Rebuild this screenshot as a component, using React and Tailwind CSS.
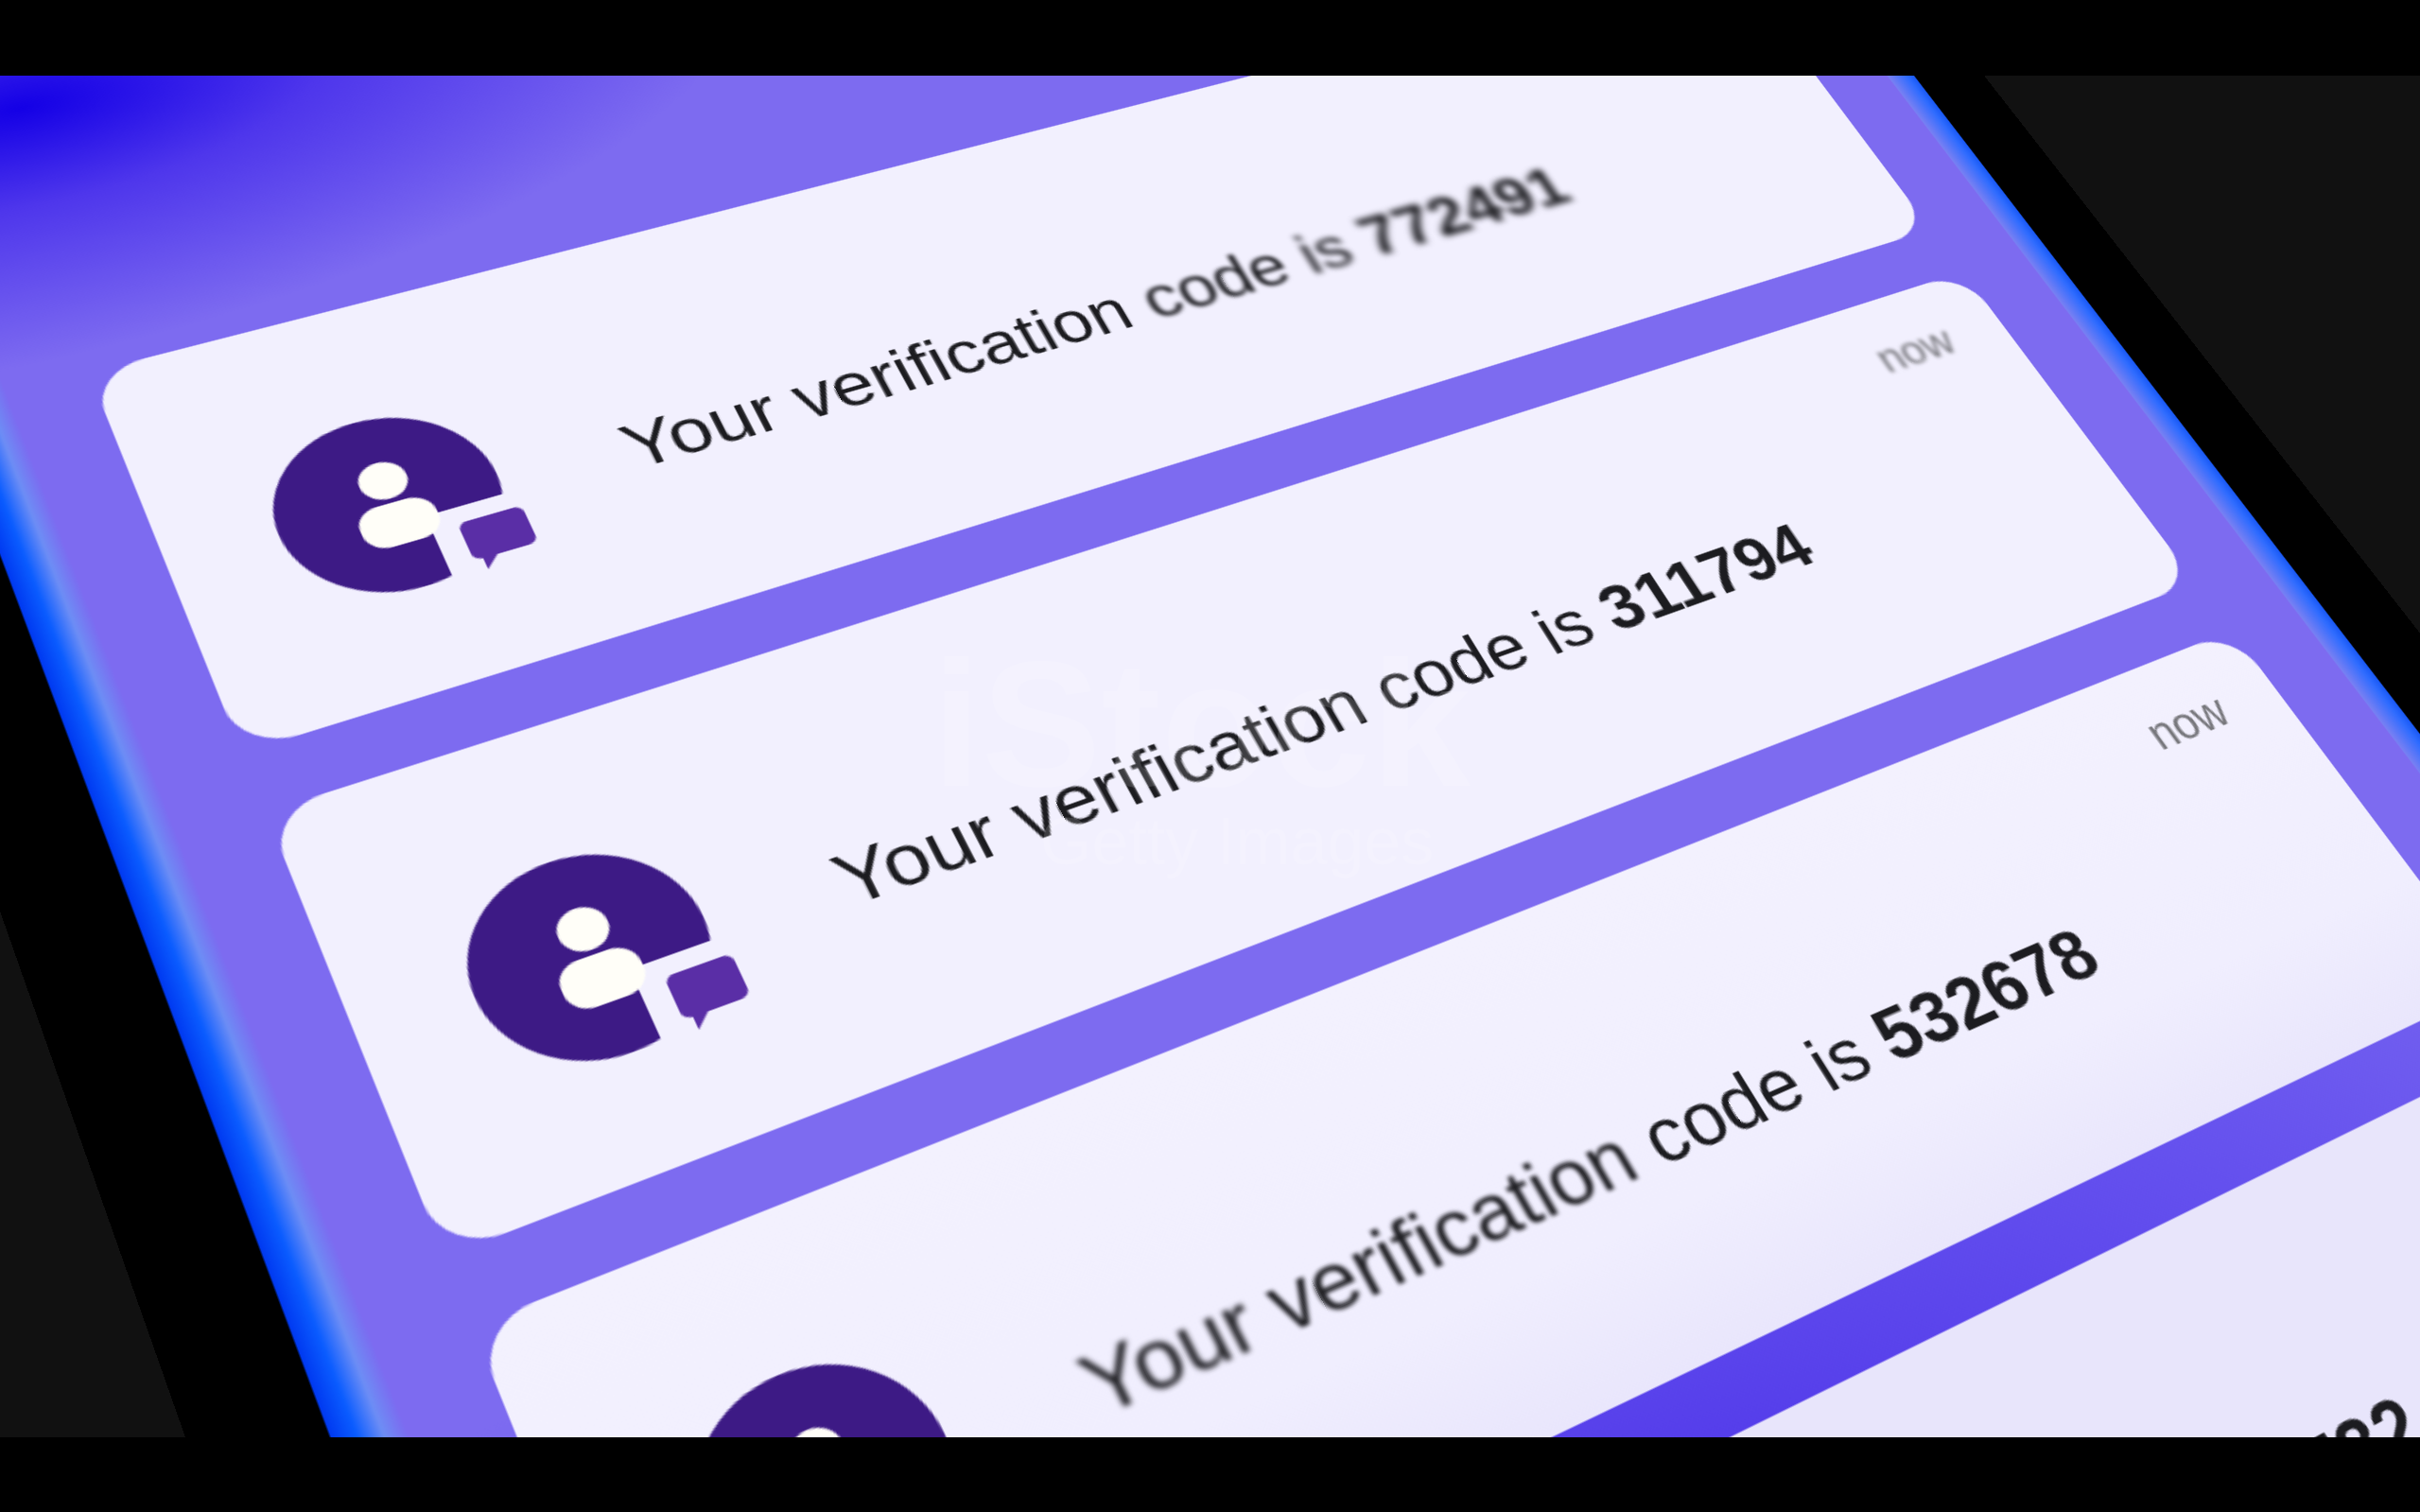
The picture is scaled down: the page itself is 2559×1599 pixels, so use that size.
import React from 'react';

// phone plane -> picture mapping (unit square to quad, then matrix3d)
const CARD_W = 1100;
const CARD_H = 270;
const GAP = 39;
const ORIGIN_X = 132;
const ORIGIN_Y = 400;

function planeMatrix(p0, p1, p2, p3) {
  const W = CARD_W;
  const T = 2 * CARD_H + GAP;
  const dx1 = p1[0] - p2[0];
  const dx2 = p3[0] - p2[0];
  const sx = p0[0] - p1[0] + p2[0] - p3[0];
  const dy1 = p1[1] - p2[1];
  const dy2 = p3[1] - p2[1];
  const sy = p0[1] - p1[1] + p2[1] - p3[1];
  const den = dx1 * dy2 - dx2 * dy1;
  const g = (sx * dy2 - dx2 * sy) / den;
  const h = (dx1 * sy - sx * dy1) / den;
  const a = p1[0] - p0[0] + g * p1[0];
  const b = p3[0] - p0[0] + h * p3[0];
  const d = p1[1] - p0[1] + g * p1[1];
  const e = p3[1] - p0[1] + h * p3[1];
  const A = a / W;
  const B = b / T;
  const C = p0[0] - (a * ORIGIN_X) / W - (b * ORIGIN_Y) / T;
  const D = d / W;
  const E = e / T;
  const F = p0[1] - (d * ORIGIN_X) / W - (e * ORIGIN_Y) / T;
  const G = g / W;
  const H = h / T;
  const I = 1 - (g * ORIGIN_X) / W - (h * ORIGIN_Y) / T;
  const m = [A, D, 0, G, B, E, 0, H, 0, 0, 1, 0, C, F, 0, I];
  return `matrix3d(${m.map((v) => (v / I).toFixed(10)).join(',')})`;
}

const PHONE_MATRIX = planeMatrix([94, 314], [1824, -128], [2322, 536], [470, 1249]);

function ChatIcon() {
  return (
    <svg viewBox="-64 -64 134 140" className="w-[134px] h-[140px] shrink-0">
      <circle cx="0" cy="0" r="60" fill="#3d1a85" />
      <rect x="15" y="15" width="60" height="60" rx="3" fill="#f2f0fe" />
      <circle cx="2" cy="-16" r="13" fill="#fffef8" />
      <rect x="-20" y="0" width="42" height="29" rx="13" fill="#fffef8" />
      <path d="M32 26h28a5 5 0 0 1 5 5v17a5 5 0 0 1-5 5H42l-8 8v-8a5 5 0 0 1-5-5V31a5 5 0 0 1 5-5z" fill="#5a2ea6" />
    </svg>
  );
}

function Card({ words, code, codeBlur, now, nowBlur, iconBlur, tint }) {
  return (
    <div className={`relative shrink-0 w-[1100px] h-[270px] rounded-[30px] flex items-center pl-[55px] blur-[0.4px] ${tint}`}>
      <div className={`mt-[26px] ${iconBlur}`}>
        <ChatIcon />
      </div>
      <p className="ml-[61px] mt-[32px] font-['Liberation_Sans',sans-serif] text-[44.5px] text-[#1c1c20] whitespace-nowrap">
        {words.map(([word, blur]) => (
          <React.Fragment key={word}>
            <span className={`inline-block ${blur}`}>{word}</span>{' '}
          </React.Fragment>
        ))}
        <span className={`inline-block font-bold ${codeBlur}`}>{code}</span>
      </p>
      {now && (
        <span className={`absolute top-[23px] right-[41px] font-['Liberation_Sans',sans-serif] text-[31px] text-[#77777c] ${nowBlur}`}>
          now
        </span>
      )}
    </div>
  );
}

export default function App() {
  return (
    <div className="h-screen flex flex-col bg-black overflow-hidden">
      <div className="h-[80px] shrink-0 bg-black" />
      <div className="relative h-[1440px] shrink-0 overflow-hidden bg-[#111111]">
        <div
          className="absolute left-0 top-0 origin-top-left flex w-[1351px] h-[2400px] pl-[57px] pr-[50px] bg-black"
          style={{ transform: PHONE_MATRIX }}
        >
          <div className="w-[31px] shrink-0 bg-[linear-gradient(to_right,#0038f0,#0a5cff_35%,#6d8df5_70%,#7b6cf0)]" />
          <div className="flex-1 flex flex-col gap-[39px] pt-[400px] pl-[44px] bg-[radial-gradient(ellipse_440px_190px_at_63px_196px,#1400e6,rgba(70,45,235,0.85)_40%,rgba(125,107,240,0)_100%),radial-gradient(ellipse_880px_380px_at_40%_1400px,#4a30e8,#6450ee_55%,#7d6bf0_100%)]">
            <Card
              words={[['Your', 'blur-[0.2px]'], ['verification', 'blur-[0.7px]'], ['code', 'blur-[1.7px]'], ['is', 'blur-[2.2px]']]}
              code="772491"
              codeBlur="blur-[2.8px]"
              iconBlur="blur-[0.2px]"
              tint="bg-[#f2f0fe]"
            />
            <Card
              words={[['Your', 'blur-[0.3px]'], ['verification', 'blur-[0.3px]'], ['code', 'blur-[0.1px]'], ['is', 'blur-[0.1px]']]}
              code="311794"
              codeBlur="blur-[0.2px]"
              now
              nowBlur="blur-[1.5px]"
              iconBlur="blur-[0.4px]"
              tint="bg-[#f2f0fe]"
            />
            <Card
              words={[['Your', 'blur-[1.7px]'], ['verification', 'blur-[0.9px]'], ['code', 'blur-[0.3px]'], ['is', 'blur-[0.1px]']]}
              code="532678"
              codeBlur="blur-[0.1px]"
              now
              nowBlur="blur-[0.5px]"
              iconBlur="blur-[0.6px]"
              tint="bg-[linear-gradient(to_bottom,#f3f1fe,#f0eefe_70%,#e9e6fc)]"
            />
            <Card
              words={[['Your', 'blur-[1px]'], ['verification', 'blur-[1px]'], ['code', 'blur-[1px]'], ['is', 'blur-[1px]']]}
              code="194732"
              codeBlur="blur-[0.5px]"
              iconBlur="blur-[1px]"
              tint="bg-[#e8e5fb]"
            />
          </div>
          <div className="w-[50px] shrink-0 bg-[#7d6bf0]" />
          <div className="w-[19px] shrink-0 bg-[linear-gradient(to_right,#7a80f2,#2f6cff_70%,#1858f5)]" />
        </div>
        <div className="absolute left-[985px] top-[590px] font-['Liberation_Sans',sans-serif] font-bold text-[190px] leading-none text-white/15 pointer-events-none">
          iStock
        </div>
        <div className="absolute left-[1100px] top-[775px] font-['Liberation_Sans',sans-serif] text-[70px] leading-none text-white/15 pointer-events-none">
          Getty Images
        </div>
      </div>
      <div className="flex-1 bg-black" />
    </div>
  );
}
